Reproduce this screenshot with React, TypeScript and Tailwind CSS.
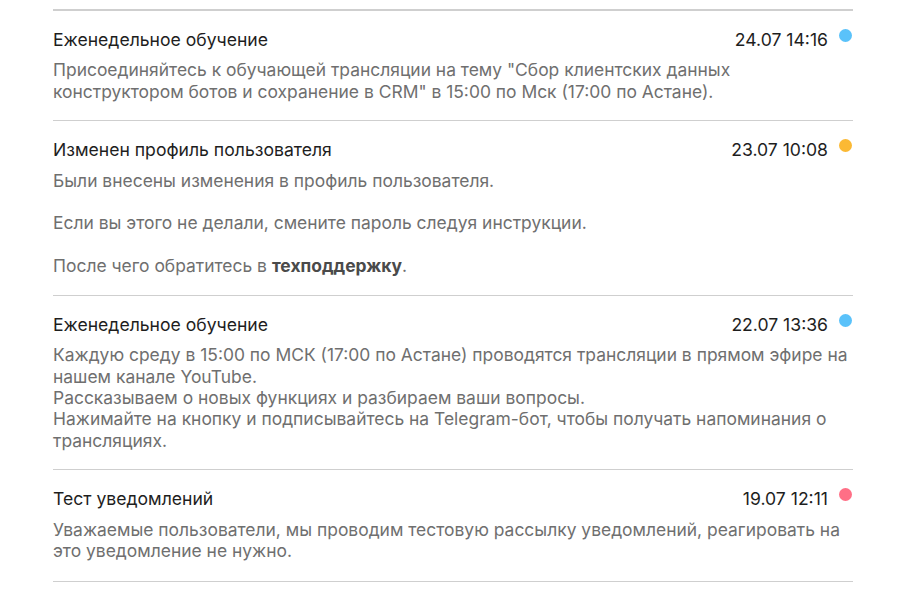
type Notice = {
  title: string;
  date: string;
  dot: string;
  body: React.ReactNode;
};

const notices: Notice[] = [
  {
    title: 'Еженедельное обучение',
    date: '24.07 14:16',
    dot: 'bg-[#5ac2fa]',
    body: (
      <p>
        Присоединяйтесь к обучающей трансляции на тему "Сбор клиентских данных конструктором ботов и
        сохранение в CRM" в 15:00 по Мск (17:00 по Астане).
      </p>
    ),
  },
  {
    title: 'Изменен профиль пользователя',
    date: '23.07 10:08',
    dot: 'bg-[#fbb934]',
    body: (
      <>
        <p>Были внесены изменения в профиль пользователя.</p>
        <p className="mt-[21.33px]">Если вы этого не делали, смените пароль следуя инструкции.</p>
        <p className="mt-[21.33px]">
          После чего обратитесь в <b className="font-bold text-[#4a4a4a]">техподдержку</b>.
        </p>
      </>
    ),
  },
  {
    title: 'Еженедельное обучение',
    date: '22.07 13:36',
    dot: 'bg-[#5ac2fa]',
    body: (
      <>
        <p>
          Каждую среду в 15:00 по МСК (17:00 по Астане) проводятся трансляции в прямом эфире на нашем
          канале YouTube.
        </p>
        <p>Рассказываем о новых функциях и разбираем ваши вопросы.</p>
        <p>Нажимайте на кнопку и подписывайтесь на Telegram-бот, чтобы получать напоминания о трансляциях.</p>
      </>
    ),
  },
  {
    title: 'Тест уведомлений',
    date: '19.07 12:11',
    dot: 'bg-[#ff6f86]',
    body: (
      <p>
        Уважаемые пользователи, мы проводим тестовую рассылку уведомлений, реагировать на это уведомление
        не нужно.
      </p>
    ),
  },
];

export default function App() {
  return (
    <div className="min-h-[596px] bg-white pt-[9px] font-['Inter','Noto_Sans',sans-serif] leading-[21.33px]">
      <div className="ml-[53px] w-[800px] border-b border-[#cfcfcf]">
        {notices.map((n, i) => (
          <div
            key={i}
            className={`border-t border-[#cfcfcf] pt-[18px] pb-[18.5px] ${i === 0 ? 'border-t-2 pt-[16px]' : ''} ${i === notices.length - 1 ? 'pb-[19.5px]' : ''}`}
          >
            <div className="flex items-start text-[17.6px]">
              <div className="flex-1 text-[#1e1e1e]">{n.title}</div>
              <div className="text-[#1e1e1e]">{n.date}</div>
              <div className={`ml-[11px] mr-[1px] mt-0 h-[13px] w-[13px] rounded-full ${n.dot}`} />
            </div>
            <div className="mt-[9px] text-[17.45px] text-[#6f6f6f]">{n.body}</div>
          </div>
        ))}
      </div>
    </div>
  );
}
